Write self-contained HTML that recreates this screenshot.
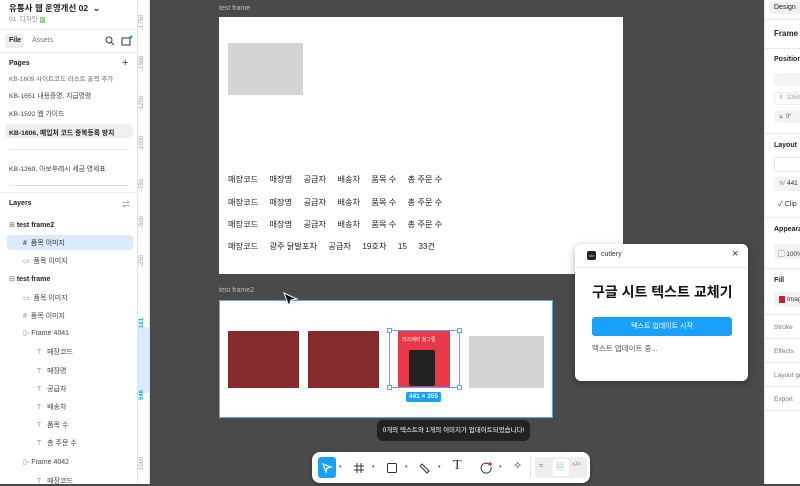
<!DOCTYPE html>
<html><head><meta charset="utf-8"><style>
*{box-sizing:border-box;margin:0;padding:0}
body{width:800px;height:484px;overflow:hidden;background:#4a4a4a;font-family:"Liberation Sans","Noto Sans CJK KR",sans-serif;position:relative;color:#222}
.abs{position:absolute}
.lp{left:0;top:0;width:138px;height:484px;background:#fff;border-right:1px solid #e5e5e5}
.t{position:absolute;white-space:nowrap}
.ruler{left:138px;top:0;width:12px;height:484px;background:#fff;border-right:1px solid #ddd}
.rl{position:absolute;left:1px;font-size:6px;color:#999;transform:rotate(-90deg);transform-origin:left top;white-space:nowrap}
.rp{left:764px;top:0;width:36px;height:484px;background:#fff;border-left:1px solid #e5e5e5}
.sep{position:absolute;left:0;width:36px;height:1px;background:#e8e8e8}
.row{font-size:8.2px;color:#222}
.ly{font-size:7px;color:#444}
</style></head><body>
<div class="abs lp">
 <div class="t" style="left:9px;top:2px;font-size:8.5px;font-weight:bold;color:#222">유통사 웹 운영개선 02 &nbsp;⌄</div>
 <div class="t" style="left:9px;top:13px;font-size:6.5px;color:#888">01. 디자인 <span style="background:#8bd18b;color:#fff;font-size:5px;padding:0 1px">✓</span></div>
 <div class="abs" style="left:0;top:29px;width:138px;height:1px;background:#eee"></div>
 <div class="abs" style="left:5px;top:34px;width:19px;height:14px;background:#eee;border-radius:3px"></div>
 <div class="t" style="left:9px;top:37px;font-size:7px;font-weight:bold">File</div>
 <div class="t" style="left:32px;top:37px;font-size:7px;color:#777">Assets</div>
 <svg class="abs" style="left:105px;top:36px" width="10" height="10"><circle cx="4" cy="4" r="3" fill="none" stroke="#333" stroke-width="1"/><path d="M6.5 6.5L9 9" stroke="#333"/></svg>
 <svg class="abs" style="left:121px;top:35px" width="12" height="11"><rect x="1" y="3" width="8" height="7" fill="none" stroke="#333"/><circle cx="10" cy="2" r="1.5" fill="#18a0fb"/></svg>
 <div class="abs" style="left:0;top:52px;width:138px;height:1px;background:#eee"></div>
 <div class="t" style="left:9px;top:60px;font-size:7px;font-weight:bold">Pages</div>
 <div class="t" style="left:122px;top:57px;font-size:11px;color:#333">+</div>
 <div class="t" style="left:9px;top:73px;font-size:6.5px;color:#666;clip-path:inset(3px 0 0 0)">KB-1609 사이트코드 리스트 출력 추가</div>
 <div class="t" style="left:9px;top:90px;font-size:6.8px;color:#444">KB-1651 내용증명, 지급명령</div>
 <div class="t" style="left:9px;top:108px;font-size:6.8px;color:#444">KB-1592 웹 가이드</div>
 <div class="abs" style="left:5px;top:124px;width:128px;height:14px;background:#f0f0f0;border-radius:3px"></div>
 <div class="t" style="left:9px;top:127px;font-size:6.8px;font-weight:bold">KB-1606, 매입처 코드 중복등록 방지</div>
 <div class="abs" style="left:9px;top:149px;width:120px;height:1px;background:#e3e3e3"></div>
 <div class="t" style="left:9px;top:163px;font-size:6.8px;color:#444">KB-1269, 아보후레시 세금 영세표</div>
 <div class="abs" style="left:9px;top:185px;width:120px;height:1px;background:#e3e3e3"></div>
 <div class="abs" style="left:0;top:192px;width:138px;height:1px;background:#eee"></div>
 <div class="t" style="left:9px;top:200px;font-size:7px;font-weight:bold">Layers</div>
 <div class="t" style="left:122px;top:199px;font-size:8px;color:#555">⇌</div>
 <div class="t" style="left:9px;top:221px;font-size:7px;font-weight:bold"><span style="color:#666;font-weight:normal">⊞</span> test frame2</div>
 <div class="abs" style="left:7px;top:235px;width:126px;height:15px;background:#daebfc;border-radius:3px"></div>
 <div class="t ly" style="left:23px;top:238px;color:#333"><b style="color:#555">#</b>&nbsp; 품목 이미지</div>
 <div class="t ly" style="left:23px;top:256px"><span style="color:#888">▭</span>&nbsp; 품목 이미지</div>
 <div class="t" style="left:9px;top:275px;font-size:7px;font-weight:bold"><span style="color:#666;font-weight:normal">⊟</span> test frame</div>
 <div class="t ly" style="left:23px;top:293px"><span style="color:#888">▭</span>&nbsp; 품목 이미지</div>
 <div class="t ly" style="left:23px;top:311px"><span style="color:#888">#</span>&nbsp; 품목 이미지</div>
 <div class="t ly" style="left:23px;top:329px"><span style="color:#888">▯▫</span>&nbsp;Frame 4041</div>
 <div class="t ly" style="left:37px;top:347px"><span style="color:#999">T</span>&nbsp;&nbsp; 매장코드</div>
 <div class="t ly" style="left:37px;top:366px"><span style="color:#999">T</span>&nbsp;&nbsp; 매장명</div>
 <div class="t ly" style="left:37px;top:384px"><span style="color:#999">T</span>&nbsp;&nbsp; 공급자</div>
 <div class="t ly" style="left:37px;top:402px"><span style="color:#999">T</span>&nbsp;&nbsp; 배송차</div>
 <div class="t ly" style="left:37px;top:420px"><span style="color:#999">T</span>&nbsp;&nbsp; 품목 수</div>
 <div class="t ly" style="left:37px;top:438px"><span style="color:#999">T</span>&nbsp;&nbsp; 총 주문 수</div>
 <div class="t ly" style="left:23px;top:458px"><span style="color:#888">▯▫</span>&nbsp;Frame 4042</div>
 <div class="t ly" style="left:37px;top:476px"><span style="color:#999">T</span>&nbsp;&nbsp; 매장코드</div>
</div>
<div class="abs ruler">
 <div class="abs" style="left:0;top:327px;width:11px;height:66px;background:#daebfc"></div>
 <div class="rl" style="top:30px">-1750</div>
 <div class="rl" style="top:71px">-1500</div>
 <div class="rl" style="top:111px">-1250</div>
 <div class="rl" style="top:151px">-1000</div>
 <div class="rl" style="top:191px">-750</div>
 <div class="rl" style="top:228px">-500</div>
 <div class="rl" style="top:267px">-250</div>
 <div class="rl" style="top:328px;color:#18a0fb;font-weight:bold">181</div>
 <div class="rl" style="top:400px;color:#18a0fb;font-weight:bold">546</div>
 <div class="rl" style="top:470px">1000</div>
</div>
<div class="t" style="left:219px;top:5px;font-size:7px;color:#bbb">test frame</div>
<div class="abs" style="left:219px;top:17px;width:404px;height:257px;background:#fff"></div>
<div class="abs" style="left:228px;top:43px;width:75px;height:52px;background:#d4d4d4"></div>
<div class="t row" style="left:228px;top:173px">매장코드&nbsp;&nbsp;&nbsp;&nbsp;&nbsp;매장명&nbsp;&nbsp;&nbsp;&nbsp;&nbsp;공급자&nbsp;&nbsp;&nbsp;&nbsp;&nbsp;배송차&nbsp;&nbsp;&nbsp;&nbsp;&nbsp;품목 수&nbsp;&nbsp;&nbsp;&nbsp;&nbsp;총 주문 수</div>
<div class="t row" style="left:228px;top:196px">매장코드&nbsp;&nbsp;&nbsp;&nbsp;&nbsp;매장명&nbsp;&nbsp;&nbsp;&nbsp;&nbsp;공급자&nbsp;&nbsp;&nbsp;&nbsp;&nbsp;배송차&nbsp;&nbsp;&nbsp;&nbsp;&nbsp;품목 수&nbsp;&nbsp;&nbsp;&nbsp;&nbsp;총 주문 수</div>
<div class="t row" style="left:228px;top:218px">매장코드&nbsp;&nbsp;&nbsp;&nbsp;&nbsp;매장명&nbsp;&nbsp;&nbsp;&nbsp;&nbsp;공급자&nbsp;&nbsp;&nbsp;&nbsp;&nbsp;배송차&nbsp;&nbsp;&nbsp;&nbsp;&nbsp;품목 수&nbsp;&nbsp;&nbsp;&nbsp;&nbsp;총 주문 수</div>
<div class="t row" style="left:228px;top:240px">매장코드&nbsp;&nbsp;&nbsp;&nbsp;&nbsp;광주 닭발포차&nbsp;&nbsp;&nbsp;&nbsp;&nbsp;공급자&nbsp;&nbsp;&nbsp;&nbsp;&nbsp;19호차&nbsp;&nbsp;&nbsp;&nbsp;&nbsp;15&nbsp;&nbsp;&nbsp;&nbsp;&nbsp;33건</div>
<div class="t" style="left:219px;top:287px;font-size:7px;color:#bbb">test frame2</div>
<div class="abs" style="left:219px;top:300px;width:334px;height:118px;background:#fff;border:1px solid #5aaaf0"></div>
<div class="abs" style="left:228px;top:331px;width:71px;height:57px;background:#862a2c"></div>
<div class="abs" style="left:308px;top:331px;width:71px;height:57px;background:#862a2c"></div>
<div class="abs" style="left:398px;top:331px;width:52px;height:57px;background:#e8384a"></div>
<div class="abs" style="left:409px;top:350px;width:26px;height:36px;background:#222;border-radius:2px"></div>
<div class="t" style="left:402px;top:336px;font-size:5px;color:#fff">라즈베리 칠그릴</div>
<div class="abs" style="left:389px;top:330px;width:71px;height:58px;border:1px solid #5aaaf0"></div>
<div class="abs" style="left:387px;top:328px;width:5px;height:5px;background:#fff;border:1px solid #5aaaf0"></div>
<div class="abs" style="left:457px;top:328px;width:5px;height:5px;background:#fff;border:1px solid #5aaaf0"></div>
<div class="abs" style="left:387px;top:385px;width:5px;height:5px;background:#fff;border:1px solid #5aaaf0"></div>
<div class="abs" style="left:457px;top:385px;width:5px;height:5px;background:#fff;border:1px solid #5aaaf0"></div>
<div class="abs" style="left:406px;top:392px;width:35px;height:10px;background:#18a0fb;border-radius:2px;color:#fff;font-size:6.5px;font-weight:bold;text-align:center;line-height:10px">441 × 355</div>
<div class="abs" style="left:469px;top:336px;width:75px;height:52px;background:#d4d4d4"></div>
<svg class="abs" style="left:283px;top:292px" width="16" height="16"><path d="M1 1L14 7L8 8L6 14Z" fill="#111" stroke="#fff" stroke-width="1"/></svg>
<div class="abs" style="left:575px;top:244px;width:173px;height:137px;background:#fff;border-radius:6px;box-shadow:0 2px 8px rgba(0,0,0,.3)">
 <div class="abs" style="left:12px;top:7px;width:9px;height:9px;background:#222;border-radius:2px;color:#fff;font-size:4px;text-align:center;line-height:9px">&lt;/&gt;</div>
 <div class="t" style="left:26px;top:7px;font-size:7px;color:#333">cutlery</div>
 <div class="t" style="left:157px;top:4px;font-size:11px;color:#333">×</div>
 <div class="abs" style="left:0;top:23px;width:173px;height:1px;background:#eee"></div>
 <div class="t" style="left:17px;top:38px;font-size:14px;font-weight:bold;color:#111">구글 시트 텍스트 교체기</div>
 <div class="abs" style="left:17px;top:73px;width:140px;height:19px;background:#18a0fb;border-radius:3px;color:#fff;font-size:7px;text-align:center;line-height:19px">텍스트 업데이트 시작</div>
 <div class="t" style="left:17px;top:99px;font-size:7.5px;color:#555">텍스트 업데이트 중...</div>
</div>
<div class="abs" style="left:377px;top:420px;width:153px;height:21px;background:#222;border-radius:6px;color:#fff;font-size:6.5px;text-align:center;line-height:21px">0개의 텍스트와 1개의 이미지가 업데이트되었습니다!</div>
<div class="abs" style="left:312px;top:452px;width:278px;height:31px;background:#fff;border-radius:8px;box-shadow:0 1px 4px rgba(0,0,0,.3)">
 <div class="abs" style="left:6px;top:5px;width:18px;height:21px;background:#18a0fb;border-radius:3px"></div>
 <svg class="abs" style="left:9px;top:10px" width="12" height="12"><path d="M2 2L10 5L6 6L5 10Z" fill="none" stroke="#fff" stroke-width="1.2"/></svg>
 <div class="t" style="left:27px;top:12px;font-size:5px;color:#555">▾</div>
 <svg class="abs" style="left:41px;top:10px" width="12" height="12"><path d="M4 1V11M8 1V11M1 4H11M1 8H11" stroke="#333" stroke-width="1"/></svg>
 <div class="t" style="left:60px;top:12px;font-size:5px;color:#555">▾</div>
 <svg class="abs" style="left:74px;top:10px" width="12" height="12"><rect x="1.5" y="1.5" width="9" height="9" rx="1" fill="none" stroke="#333"/></svg>
 <div class="t" style="left:93px;top:12px;font-size:5px;color:#555">▾</div>
 <svg class="abs" style="left:107px;top:10px" width="12" height="12"><path d="M3 2L10 9L8 11L1 4Z" fill="none" stroke="#333"/></svg>
 <div class="t" style="left:126px;top:12px;font-size:5px;color:#555">▾</div>
 <div class="t" style="left:141px;top:6px;font-size:14px;color:#333;font-family:'Liberation Serif',serif">T</div>
 <svg class="abs" style="left:168px;top:9px" width="13" height="13"><path d="M9 3A5 5 0 1 0 11 6" fill="none" stroke="#333"/><circle cx="10" cy="3" r="1.8" fill="#e33"/></svg>
 <div class="t" style="left:187px;top:12px;font-size:5px;color:#555">▾</div>
 <div class="t" style="left:201px;top:7px;font-size:11px;color:#333">✧</div>
 <div class="abs" style="left:218px;top:4px;width:1px;height:23px;background:#e5e5e5"></div>
 <div class="abs" style="left:223px;top:5px;width:52px;height:21px;background:#eee;border-radius:4px"></div>
 <div class="abs" style="left:241px;top:7px;width:16px;height:17px;background:#fff;border-radius:3px"></div>
 <div class="t" style="left:227px;top:9px;font-size:8px;color:#777">≈</div>
 <div class="t" style="left:244px;top:9px;font-size:8px;color:#18a0fb">▤</div>
 <div class="t" style="left:260px;top:10px;font-size:6px;color:#777">&lt;/&gt;</div>
</div>
<div class="abs rp">
 <div class="abs" style="left:4px;top:2px;width:32px;height:12px;background:#f0f0f0;border-radius:3px"></div>
 <div class="t" style="left:9px;top:4px;font-size:7px;color:#222">Design</div>
 <div class="sep" style="top:19px"></div>
 <div class="t" style="left:9px;top:29px;font-size:8px;font-weight:bold">Frame</div>
 <div class="sep" style="top:48px"></div>
 <div class="t" style="left:9px;top:56px;font-size:7px;font-weight:bold">Position</div>
 <div class="abs" style="left:9px;top:73px;width:30px;height:13px;background:#f3f3f3;border-radius:3px"></div>
 <div class="abs" style="left:9px;top:92px;width:30px;height:13px;border:1px solid #eee;border-radius:3px"></div>
 <div class="t" style="left:14px;top:95px;font-size:6px;color:#999">X &nbsp;1058</div>
 <div class="abs" style="left:9px;top:110px;width:30px;height:13px;background:#f3f3f3;border-radius:3px"></div>
 <div class="t" style="left:14px;top:113px;font-size:6px;color:#555">⊾ 0°</div>
 <div class="sep" style="top:133px"></div>
 <div class="t" style="left:9px;top:142px;font-size:7px;font-weight:bold">Layout</div>
 <div class="abs" style="left:9px;top:157px;width:30px;height:15px;border:1px solid #e5e5e5;border-radius:3px"></div>
 <div class="abs" style="left:9px;top:177px;width:30px;height:14px;background:#f3f3f3;border-radius:3px"></div>
 <div class="t" style="left:14px;top:180px;font-size:6.5px;color:#999">W <span style="color:#333">441</span></div>
 <div class="t" style="left:13px;top:199px;font-size:7px;color:#333">✓ Clip</div>
 <div class="sep" style="top:217px"></div>
 <div class="t" style="left:9px;top:226px;font-size:7px;font-weight:bold">Appearance</div>
 <div class="abs" style="left:9px;top:244px;width:30px;height:15px;background:#f3f3f3;border-radius:3px"></div>
 <div class="t" style="left:13px;top:248px;font-size:6.5px;color:#333">▢ 100%</div>
 <div class="sep" style="top:268px"></div>
 <div class="t" style="left:9px;top:277px;font-size:7px;font-weight:bold">Fill</div>
 <div class="abs" style="left:9px;top:292px;width:30px;height:15px;background:#f3f3f3;border-radius:3px"></div>
 <div class="abs" style="left:14px;top:296px;width:6px;height:7px;background:#c22"></div>
 <div class="t" style="left:22px;top:296px;font-size:6.5px;color:#333">Image</div>
 <div class="sep" style="top:314px"></div>
 <div class="t" style="left:9px;top:324px;font-size:6.5px;color:#777">Stroke</div>
 <div class="sep" style="top:338px"></div>
 <div class="t" style="left:9px;top:348px;font-size:6.5px;color:#777">Effects</div>
 <div class="sep" style="top:362px"></div>
 <div class="t" style="left:9px;top:372px;font-size:6.5px;color:#777">Layout grid</div>
 <div class="sep" style="top:386px"></div>
 <div class="t" style="left:9px;top:396px;font-size:6.5px;color:#777">Export</div>
 <div class="sep" style="top:410px"></div>
</div>
</body></html>
